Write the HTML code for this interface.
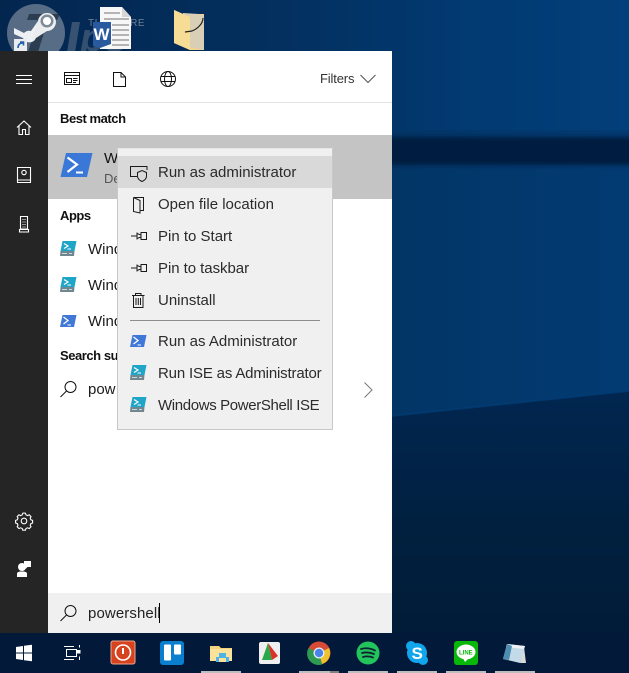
<!DOCTYPE html>
<html><head><meta charset="utf-8"><style>
html,body{margin:0;padding:0;width:629px;height:673px;overflow:hidden;background:#012a55}
*{box-sizing:border-box}
body{font-family:"Liberation Sans",sans-serif;position:relative}
.a{position:absolute}
.t{position:absolute;white-space:nowrap;font-size:15px;line-height:20px;color:#1a1a1a}
.b{font-weight:bold;font-size:13px;color:#111;letter-spacing:-.45px}
.m{color:#2b2b2b;left:158px}
svg{position:absolute;overflow:hidden}
</style></head><body>

<!-- wallpaper -->
<svg style="left:0;top:0" width="629" height="673" viewBox="0 0 629 673">
<defs>
<linearGradient id="w" x1="0" y1="0" x2="1" y2="0"><stop offset="0" stop-color="#03264f"/><stop offset=".45" stop-color="#03305f"/><stop offset=".75" stop-color="#023a72"/><stop offset="1" stop-color="#033f7a"/></linearGradient>
<linearGradient id="w2" x1="0" y1="0" x2="1" y2="0"><stop offset="0" stop-color="#022a56"/><stop offset=".55" stop-color="#023464"/><stop offset="1" stop-color="#023b72"/></linearGradient>
<linearGradient id="w3" x1="0" y1="0" x2="0" y2="1"><stop offset="0" stop-color="#012650"/><stop offset=".5" stop-color="#01203f"/><stop offset="1" stop-color="#011a35"/></linearGradient>
<filter id="bl" x="0" y="-100%" width="100%" height="300%"><feGaussianBlur stdDeviation="0 2"/></filter>
</defs>
<rect width="629" height="140" fill="url(#w)"/>
<rect y="130" width="629" height="290" fill="url(#w2)"/>
<rect x="392" y="137" width="237" height="28" fill="#021f3f" filter="url(#bl)"/>
<path d="M392 416 L629 391 L629 673 L392 673Z" fill="url(#w3)"/>
<path d="M392 416 L629 391" stroke="#03407a" stroke-width="2" opacity=".55" fill="none"/>
</svg>

<!-- watermark + desktop icons -->
<svg style="left:0;top:0" width="220" height="52" viewBox="0 0 220 52">
<circle cx="36" cy="33" r="29" fill="#8f9aa8" opacity=".6"/>
<text x="88" y="26" font-size="10" fill="#6f8095" font-family="Liberation Sans" letter-spacing=".6">THAIWARE</text>
<path d="M29 14H60L57 20H48L38 52H28L38 20H27Z" fill="#1f2d40" opacity=".75"/>
<path d="M72 22H80L75 52H67Z" fill="#7a8898" opacity=".45"/>
<text x="80" y="51" font-size="40" font-weight="bold" font-style="italic" fill="#6f8095" opacity=".45" font-family="Liberation Sans">ps</text>
<path d="M14 28 L24 33 A7 7 0 0 1 31 31 L38 21 A9 9 0 1 1 47 31 L36 38 A7 7 0 0 1 23 38 L14 34Z" fill="#fff" opacity=".9"/>
<circle cx="47" cy="21" r="6.500" fill="#7f8a99"/><circle cx="47" cy="21" r="4" fill="#fff"/>
<rect x="14" y="39" width="13" height="12" fill="#e9edf0"/>
<path d="M18 48 q0-5 5-5 M20 42 h3.5 v3.5" stroke="#2360a8" stroke-width="1.6" fill="none"/>
<path d="M100 7 H122 L131 17 V49 H100Z" fill="#f7f7f7"/>
<path d="M122 7 V17 H131Z" fill="#d6d6d6"/>
<path d="M104 13h16M104 19h25M112 25h17M112 30h17M112 35h17M112 40h17M112 45h17" stroke="#9d9d9d" stroke-width="1.500"/>
<path d="M93 22 H111 V44 L100 48 L93 46Z" fill="#2a5a9e"/>
<text x="93.500" y="40" font-size="17" font-weight="bold" fill="#fff" font-family="Liberation Sans">W</text>
<path d="M174 10 L183 14 H204 V50 H190 L174 43Z" fill="#f2d48a"/>
<path d="M183 13 L199 14 L204 16 V50 L183 46Z" fill="#d8cfb6"/>
<path d="M174 10 L190 17 V50 L174 43Z" fill="#f7dc95"/>
<path d="M203 18 C203 24 197 29 192 31 L185 32" stroke="#222" stroke-width="1.2" fill="none"/>
</svg>

<!-- rail -->
<div class="a" style="left:0;top:51px;width:48px;height:582px;background:#252525"></div>
<!-- panel -->
<div class="a" style="left:48px;top:51px;width:344px;height:582px;background:#fff"></div>
<div class="a" style="left:48px;top:102px;width:344px;height:1px;background:#e4e4e4"></div>
<div class="a" style="left:48px;top:135px;width:344px;height:64px;background:#c4c4c4"></div>
<div class="a" style="left:48px;top:593px;width:344px;height:40px;background:#f0f0f0"></div>

<!-- rail icons -->
<svg style="left:0;top:51px" width="48" height="582" viewBox="0 51 48 582" fill="none" stroke="#fff" stroke-width="1.100">
<path d="M16 75.5H32M16 79.5H32M16 83.5H32"/>
<path d="M17 127.5 L24 121 L31 127.5M19 126 V134.5 H22.5 V129.5 H25.5 V134.5 H29 V126"/>
<path d="M17.5 167.5H30.5V182.5H17.5ZM17.5 180H30.5"/><circle cx="24" cy="172.5" r="2.2"/>
<path d="M20.5 216.5H27.5V229H20.5Z M19.5 229.5H28.5V232H19.5Z"/>
<path d="M22.5 219.5h3M22.5 222h3M22.5 224.5h3M22.5 227h3" stroke-dasharray="1 1"/>
<circle cx="24" cy="521" r="2.8"/>
<path d="M24 513.2l1.4.2.6 1.7 1.6.7 1.6-.8 1.8 1.8-.8 1.6.7 1.6 1.7.6v2.6l-1.7.6-.7 1.6.8 1.6-1.8 1.8-1.6-.8-1.6.7-.6 1.7h-2.6l-.6-1.7-1.6-.7-1.6.8-1.8-1.8.8-1.6-.7-1.6-1.7-.6v-2.6l1.7-.6.7-1.6-.8-1.6 1.8-1.8 1.6.8 1.6-.7.6-1.7z" transform="translate(0,-.2)"/>
<circle cx="22" cy="567" r="4" fill="#fff" stroke="none"/>
<path d="M17 577 V573.5 Q17 572 20 571.5 H24 Q27 572 27 573.5 V577Z" fill="#fff" stroke="none"/>
<path d="M24 561 H31 V567 H27.5 L25.5 569 V566 H24Z" fill="#fff" stroke="none"/>
</svg>

<!-- top filter icons -->
<svg style="left:48px;top:51px" width="344" height="52" viewBox="48 51 344 52" fill="none" stroke="#111" stroke-width="1">
<path d="M64.5 72.5H79.5V84.5H64.5ZM64.5 75.5H79.5"/>
<path d="M66.5 78.5H71.5V82.5H66.5ZM73 78.5H77.5M73 80.5H77.5M73 82.5H76" />
<path d="M113.5 72.5H121L125.5 77V86.5H113.5ZM121 72.5V77H125.5"/>
<circle cx="168" cy="79" r="7.5"/><ellipse cx="168" cy="79" rx="3.5" ry="7.5"/><path d="M160.5 76.5H175.5M160.5 81.5H175.5"/>
<path d="M360.5 75 L368 82.5 L375.5 75" stroke="#555"/>
</svg>
<div class="t" style="left:320px;top:69px;font-size:13px;color:#333;letter-spacing:-.15px">Filters</div>

<div class="t b" style="left:60px;top:109px">Best match</div>
<div class="t" style="left:104px;top:149px;font-size:15px;color:#111">W</div>
<div class="t" style="left:104px;top:169px;font-size:13px;color:#555">De</div>
<svg style="left:60px;top:152px" width="33" height="26" viewBox="0 0 33 26">
<path d="M6 1H32.5L27 25H0.5Z" fill="#3a78d8"/>
<path d="M7.5 5.5L17 12.5L7.5 20" stroke="#fff" stroke-width="2.2" fill="none"/><path d="M16 20.5H23" stroke="#fff" stroke-width="2"/>
</svg>

<div class="t b" style="left:60px;top:206px">Apps</div>
<div class="t" style="left:88px;top:240px">Wind</div>
<div class="t" style="left:88px;top:276px">Wind</div>
<div class="t" style="left:88px;top:312px">Wind</div>
<div class="t b" style="left:60px;top:346px">Search sug</div>
<div class="t" style="left:88px;top:380px">pow</div>

<svg style="left:60px;top:241px" width="17" height="16" viewBox="0 0 17 16"><path d="M2.5 0H16.5L14.5 10H0.5Z" fill="#1fa5c8"/><path d="M0.5 10H14.5L14 15H0Z" fill="#70878f"/><path d="M4 2.5L8 5L4 7.5" stroke="#fff" stroke-width="1.2" fill="none"/><path d="M7.5 8H11" stroke="#fff"/><path d="M2 12.5h5M9 12.5h3" stroke="#cfdadf"/></svg>
<svg style="left:60px;top:277px" width="17" height="16" viewBox="0 0 17 16"><path d="M2.5 0H16.5L14.5 10H0.5Z" fill="#1fa5c8"/><path d="M0.5 10H14.5L14 15H0Z" fill="#70878f"/><path d="M4 2.5L8 5L4 7.5" stroke="#fff" stroke-width="1.2" fill="none"/><path d="M7.5 8H11" stroke="#fff"/><path d="M2 12.5h5M9 12.5h3" stroke="#cfdadf"/></svg>
<svg style="left:60px;top:315px" width="17" height="12" viewBox="0 0 17 12"><path d="M2.5 0H16.5L14 12H0Z" fill="#3f78d6"/><path d="M3.5 2L8 5.5L3.5 9" stroke="#fff" stroke-width="1.3" fill="none"/><path d="M7.5 10H11" stroke="#fff"/></svg>

<svg style="left:60px;top:380px" width="18" height="18" viewBox="0 0 18 18" fill="none" stroke="#111" stroke-width="1"><circle cx="10.5" cy="7" r="5.5"/><path d="M6.5 11L.5 17"/></svg>
<svg style="left:362px;top:381px" width="12" height="18" viewBox="0 0 12 18" fill="none" stroke="#777" stroke-width="1"><path d="M2.5 1.5L10 9L2.5 16.5"/></svg>

<svg style="left:60px;top:604px" width="18" height="18" viewBox="0 0 18 18" fill="none" stroke="#111" stroke-width="1"><circle cx="10.5" cy="7" r="5.5"/><path d="M6.5 11L.5 17"/></svg>
<div class="t" style="left:88px;top:604px;color:#222;letter-spacing:.1px">powershell</div>
<div class="a" style="left:159px;top:603px;width:1px;height:20px;background:#000"></div>

<!-- context menu -->
<div class="a" style="left:117px;top:148px;width:216px;height:282px;background:#f0f0f0;border:1px solid #c8c8c8;border-top-color:#e6e6e6"></div>
<div class="a" style="left:118px;top:156px;width:214px;height:32px;background:#d9d9d9"></div>
<div class="t m" style="top:163px">Run as administrator</div>
<div class="t m" style="top:195px">Open file location</div>
<div class="t m" style="top:227px">Pin to Start</div>
<div class="t m" style="top:259px;letter-spacing:-.05px">Pin to taskbar</div>
<div class="t m" style="top:291px">Uninstall</div>
<div class="a" style="left:130px;top:320px;width:190px;height:1px;background:#8d8d8d"></div>
<div class="t m" style="top:332px">Run as Administrator</div>
<div class="t m" style="top:364px;letter-spacing:-.17px">Run ISE as Administrator</div>
<div class="t m" style="top:396px;letter-spacing:-.36px">Windows PowerShell ISE</div>

<svg style="left:117px;top:148px" width="216" height="282" viewBox="117 148 216 282" fill="none" stroke="#1a1a1a" stroke-width="1">
<path d="M137 176.5H130.5V166.5H147V170"/><path d="M137.5 172.5 L142 170.5 L146.5 172.5 V176 Q146.5 179.5 142 181.5 Q137.5 179.5 137.5 176Z"/>
<path d="M133.5 197.5H143.5V210.5H140M133.5 197.5V211.5L140 213V200.5L133.5 197.5"/>
<path d="M131 236H137M137 232.5V239.5M137 233.5L141 235M137 238.5L141 237M141 232.5H146.5V239.5H141Z"/>
<path d="M131 268H137M137 264.5V271.5M137 265.5L141 267M137 270.5L141 269M141 264.5H146.5V271.5H141Z"/>
<path d="M132 295.5H144.5M135.5 295.5V293.5H141V295.5M133.5 295.5V307.5H143V295.5M136 298V305M138.3 298V305M140.5 298V305"/>
</svg>
<svg style="left:130px;top:335px" width="17" height="12" viewBox="0 0 17 12"><path d="M2.5 0H16.5L14 12H0Z" fill="#3f78d6"/><path d="M3.5 2L8 5.5L3.5 9" stroke="#fff" stroke-width="1.3" fill="none"/><path d="M7.5 10H11" stroke="#fff"/></svg>
<svg style="left:130px;top:365px" width="17" height="16" viewBox="0 0 17 16"><path d="M2.5 0H16.5L14.5 10H0.5Z" fill="#1fa5c8"/><path d="M0.5 10H14.5L14 15H0Z" fill="#70878f"/><path d="M4 2.5L8 5L4 7.5" stroke="#fff" stroke-width="1.2" fill="none"/><path d="M7.5 8H11" stroke="#fff"/><path d="M2 12.5h5M9 12.5h3" stroke="#cfdadf"/></svg>
<svg style="left:130px;top:397px" width="17" height="16" viewBox="0 0 17 16"><path d="M2.5 0H16.5L14.5 10H0.5Z" fill="#1fa5c8"/><path d="M0.5 10H14.5L14 15H0Z" fill="#70878f"/><path d="M4 2.5L8 5L4 7.5" stroke="#fff" stroke-width="1.2" fill="none"/><path d="M7.5 8H11" stroke="#fff"/><path d="M2 12.5h5M9 12.5h3" stroke="#cfdadf"/></svg>

<!-- taskbar -->
<div class="a" style="left:0;top:633px;width:629px;height:40px;background:#02193a"></div>
<svg style="left:0;top:633px" width="629" height="40" viewBox="0 633 629 40">
<path d="M16 647L23 646V652.5H16ZM24 645.8L32 644.8V652.5H24ZM16 653.5H23V660L16 659ZM24 653.5H32V661.3L24 660.2Z" fill="#fff"/>
<g fill="none" stroke="#fff" stroke-width="1"><path d="M66.5 649.5H76.5V656.5H66.5ZM64 646.5H74M64 659.5H74M79.5 645V647.5M79.5 656.5V660"/></g><rect x="77" y="650" width="3.5" height="3.5" fill="#fff"/>
<rect x="111" y="641" width="24" height="23" rx="2" fill="#d8431f" stroke="#eea58e"/>
<circle cx="123" cy="652.5" r="7.5" fill="none" stroke="#fff" stroke-width="1.6"/><path d="M123 648V654" stroke="#fff" stroke-width="2"/>
<rect x="160" y="641" width="24" height="24" rx="3" fill="#0a7fd0"/>
<rect x="164" y="644.5" width="7" height="16" rx="1" fill="#fff"/><rect x="174" y="644.5" width="7" height="10" rx="1" fill="#fff"/>
<path d="M210 646H219L221 648H232V661H210Z" fill="#f5d27d"/><path d="M210 649H232V661H210Z" fill="#fae29a"/>
<path d="M216 657H219V653H226V657H229V662H216Z" fill="#4db4e8"/><rect x="219" y="658" width="7" height="4" fill="#fae29a"/>
<rect x="259" y="642" width="21" height="22" rx="2" fill="#efefef"/>
<path d="M262 660L268 643L272 660Z" fill="#2aa84a"/><path d="M268 643L278 656L272 660Z" fill="#d9322a"/>
<circle cx="319" cy="653" r="11.5" fill="#d74a36"/>
<path d="M319 653L329 648A11.5 11.5 0 0 1 322 664Z" fill="#efc12c"/>
<path d="M319 653L322 664.5A11.5 11.5 0 0 1 308.5 648Z" fill="#2f9b52"/>
<circle cx="319" cy="653" r="5.5" fill="#e8eef8"/><circle cx="319" cy="653" r="4.2" fill="#4a84e8"/>
<circle cx="368" cy="653" r="11.5" fill="#22c45c"/>
<g fill="none" stroke="#123" stroke-width="1.8" stroke-linecap="round"><path d="M361 649Q368 647 375 650.5M362 653Q368 651.5 374 654M363 657Q368 655.5 373 657.5"/></g>
<circle cx="417" cy="653" r="10" fill="#11a5ec"/><circle cx="411" cy="646" r="5" fill="#11a5ec"/><circle cx="423" cy="660" r="5" fill="#11a5ec"/>
<text x="411.500" y="659" font-size="17" font-weight="bold" fill="#fff" font-family="Liberation Sans">S</text>
<rect x="454" y="641" width="24" height="24" rx="3" fill="#08b808"/>
<ellipse cx="466" cy="652" rx="9.500" ry="7.500" fill="#fff"/><path d="M463 658L465 662L469 658Z" fill="#fff"/>
<text x="459" y="654.500" font-size="6" font-weight="bold" fill="#08b808" font-family="Liberation Sans">LINE</text>
<path d="M507 644L525 646L520 663L503 659Z" fill="#c3dbe8"/><path d="M507 644L525 646L524 649L506 647Z" fill="#eef2f4"/><path d="M503 659L507 644L512 646L509 660Z" fill="#4c8db0"/><path d="M524 647L526 663H520Z" fill="#d9d9d9"/>
<g fill="#bdbdbd"><rect x="201" y="671" width="40" height="2"/><rect x="299" y="671" width="31" height="2"/><rect x="348" y="671" width="40" height="2"/><rect x="397" y="671" width="40" height="2"/><rect x="446" y="671" width="40" height="2"/><rect x="495" y="671" width="40" height="2"/></g>
<rect x="330" y="671" width="9" height="2" fill="#7f7f7f"/>
</svg>
</body></html>
